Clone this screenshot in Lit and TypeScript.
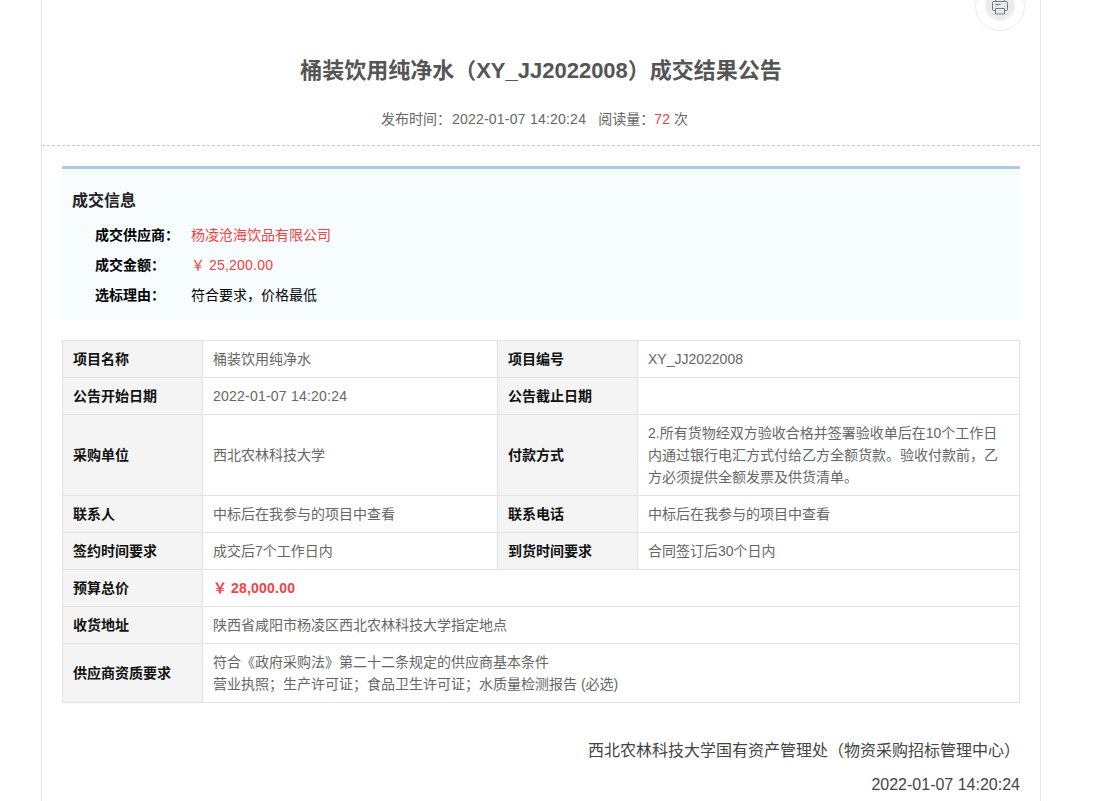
import { LitElement, html, css } from "lit";
import { customElement } from "lit/decorators.js";

@customElement("app-root")
export class AppRoot extends LitElement {
  static styles = css`
    :host {
      display: block;
      height: 801px;
      overflow: hidden;
      background: #fff;
      font-family: "Liberation Sans", "Noto Sans CJK SC", sans-serif;
      font-size: 14px;
      color: #666;
    }
    .page {
      position: relative;
      box-sizing: border-box;
      width: 1000px;
      margin-left: 41px;
      height: 801px;
      border-left: 1px solid #e5e5e5;
      border-right: 1px solid #e5e5e5;
    }
    .print {
      position: absolute;
      left: 933px;
      top: -19px;
      width: 50px;
      height: 50px;
      box-sizing: border-box;
      border: 1px solid #e8e8e8;
      border-radius: 50%;
      background: #fff;
      display: flex;
      align-items: center;
      justify-content: center;
    }
    .print-inner {
      position: relative;
      width: 30px;
      height: 30px;
      border-radius: 50%;
      background: radial-gradient(circle at 50% 45%, #e8e8e8 0, #ececec 55%, #f5f5f5 100%);
    }
    .print svg {
      position: absolute;
      left: 7px;
      top: 9px;
    }
    header {
      height: 146px;
      box-sizing: border-box;
      padding-top: 55px;
      border-bottom: 1px dashed #ccc;
      text-align: center;
    }
    h1 {
      margin: 0;
      font-size: 22px;
      line-height: 32px;
      font-weight: 700;
      color: #555;
    }
    .meta {
      margin-top: 21px;
      padding-right: 13px;
      line-height: 22px;
      color: #666;
    }
    .date {
      margin-left: 1px;
    }
    .read {
      margin-left: 12px;
    }
    .n {
      letter-spacing: 0.22px;
    }
    .red {
      color: #f04343;
    }
    .content {
      padding: 20px 20px 0;
    }
    .deal {
      box-sizing: border-box;
      height: 154px;
      border-top: 3px solid #aecde4;
      background: #f7fcff;
      padding: 21px 10px 0;
      color: #000;
    }
    h2 {
      margin: 0 0 8px;
      font-size: 16px;
      line-height: 22px;
      font-weight: 700;
      color: #222;
    }
    .deal-row {
      display: grid;
      grid-template-columns: 95px 1fr;
      padding-left: 24px;
      line-height: 30px;
    }
    .deal-row b {
      font-weight: 700;
      margin-left: -1px;
    }
    table {
      width: 958px;
      margin-top: 20px;
      border-collapse: collapse;
      table-layout: fixed;
    }
    col.label {
      width: 140px;
    }
    col.value {
      width: 295px;
    }
    td {
      border: 1px solid #e3e3e3;
      padding: 7px 10px;
      line-height: 22px;
      color: #666;
      vertical-align: middle;
      word-break: break-all;
    }
    td.l {
      background: #f4f4f4;
      color: #111;
      font-weight: 700;
    }
    td.price {
      color: #f04343;
      font-weight: 700;
    }
    footer {
      margin-top: 31px;
      text-align: right;
      font-size: 16px;
      line-height: 33px;
      color: #444;
    }
    .signed {
      margin-top: 1px;
    }
  `;

  render() {
    return html`<div class="page">
      <div class="print">
        <div class="print-inner">
          <svg width="16" height="15" viewBox="0 0 16 15" fill="none" stroke="#717c8e" stroke-width="1">
            <path d="M3.500 1.500v-3h9v3" />
            <path d="M3.500 10.500h-2a1 1 0 0 1-1-1v-7a1 1 0 0 1 1-1h13a1 1 0 0 1 1 1v7a1 1 0 0 1-1 1h-2" />
            <path d="M3.500 8.500h9v5.500h-9z" />
            <path d="M3.500 4.500h5" />
          </svg>
        </div>
      </div>
      <header>
        <h1>桶装饮用纯净水（XY_JJ2022008）成交结果公告</h1>
        <div class="meta">发布时间：<span class="n date">2022-01-07 14:20:24</span><span class="read">阅读量：</span><span class="red n">72</span> 次</div>
      </header>
      <div class="content">
        <section class="deal">
          <h2>成交信息</h2>
          <div class="deal-row"><b>成交供应商：</b><span class="red">杨凌沧海饮品有限公司</span></div>
          <div class="deal-row"><b>成交金额：</b><span class="red">￥ <span class="n">25,200.00</span></span></div>
          <div class="deal-row"><b>选标理由：</b><span>符合要求，价格最低</span></div>
        </section>
        <table>
          <colgroup><col class="label" /><col class="value" /><col class="label" /><col /></colgroup>
          <tr><td class="l">项目名称</td><td>桶装饮用纯净水</td><td class="l">项目编号</td><td>XY_JJ2022008</td></tr>
          <tr><td class="l">公告开始日期</td><td><span class="n">2022-01-07 14:20:24</span></td><td class="l">公告截止日期</td><td></td></tr>
          <tr>
            <td class="l">采购单位</td><td>西北农林科技大学</td><td class="l">付款方式</td>
            <td>2.所有货物经双方验收合格并签署验收单后在10个工作日内通过银行电汇方式付给乙方全额货款。验收付款前，乙方必须提供全额发票及供货清单。</td>
          </tr>
          <tr><td class="l">联系人</td><td>中标后在我参与的项目中查看</td><td class="l">联系电话</td><td>中标后在我参与的项目中查看</td></tr>
          <tr><td class="l">签约时间要求</td><td>成交后7个工作日内</td><td class="l">到货时间要求</td><td>合同签订后30个日内</td></tr>
          <tr><td class="l">预算总价</td><td class="price" colspan="3">￥ <span class="n">28,000.00</span></td></tr>
          <tr><td class="l">收货地址</td><td colspan="3">陕西省咸阳市杨凌区西北农林科技大学指定地点</td></tr>
          <tr>
            <td class="l">供应商资质要求</td>
            <td colspan="3">符合《政府采购法》第二十二条规定的供应商基本条件<br />营业执照；生产许可证；食品卫生许可证；水质量检测报告 (必选)</td>
          </tr>
        </table>
        <footer>
          <div>西北农林科技大学国有资产管理处（物资采购招标管理中心）</div>
          <div class="signed">2022-01-07 14:20:24</div>
        </footer>
      </div>
    </div>`;
  }
}
